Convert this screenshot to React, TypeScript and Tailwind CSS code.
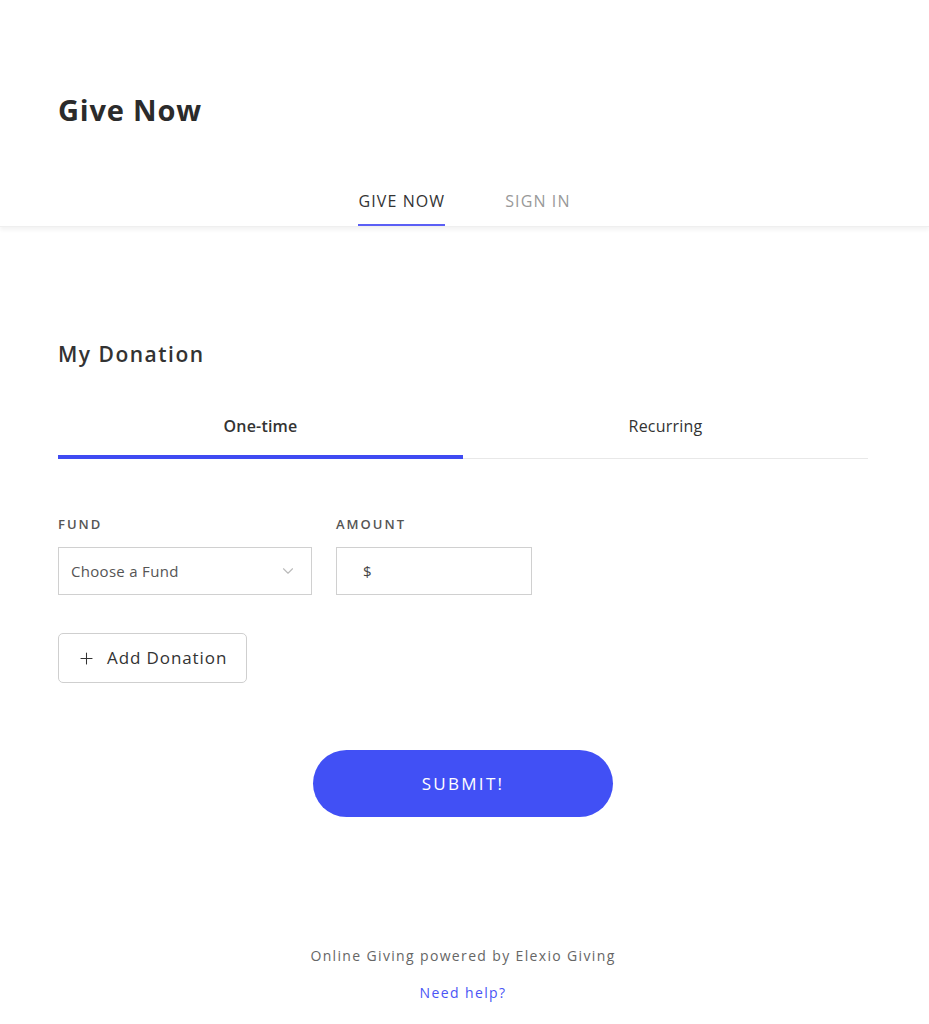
import { ChevronDown, Plus } from 'lucide-react'

const FONT = { fontFamily: '"Open Sans", "Noto Sans", sans-serif' }

export default function App() {
  return (
    <div className="min-h-screen bg-white text-[#333]" style={FONT}>
      <header className="pt-[92px] pl-[58px]">
        <h1 className="text-[29px] font-bold leading-[36px] tracking-[0.8px] text-[#2b2b2b]">Give Now</h1>
      </header>

      <nav className="mt-[50px] flex justify-center gap-[60px] bg-white shadow-[0_3px_4px_rgba(0,0,0,0.05)] border-b border-[#efefef]">
        <a className="pt-[11px] pb-[11px] text-[16px] leading-[24px] tracking-[1.1px] text-[#333] border-b-2 border-[#5b5ff5]">
          GIVE NOW
        </a>
        <a className="pt-[11px] pb-[11px] text-[16px] leading-[24px] tracking-[1.1px] text-[#999] border-b-2 border-transparent">
          SIGN IN
        </a>
      </nav>

      <main className="ml-[58px] w-[810px]">
        <h2 className="mt-[113px] text-[21px] font-semibold leading-[28px] tracking-[1.5px] text-[#333]">My Donation</h2>

        <div className="mt-[46px] grid grid-cols-2">
          <button className="flex items-start justify-center pb-[17px] text-[16px] font-semibold leading-[24px] tracking-[0.2px] text-[#333] border-b-4 border-[#3f4bf2]">
            One-time
          </button>
          <button className="flex items-start justify-center pb-[17px] text-[16px] leading-[24px] tracking-[0.2px] text-[#333] border-b border-[#e8e8e8]">
            Recurring
          </button>
        </div>

        <div className="mt-[56px] flex gap-[24px]">
          <div className="flex flex-col">
            <label className="text-[13px] font-semibold leading-[18px] tracking-[2px] text-[#555]">FUND</label>
            <div className="mt-[14px] flex h-[48px] w-[254px] items-center justify-between border border-[#d0d0d0] pl-[12px] pr-[14px]">
              <span className="text-[15px] tracking-[0.3px] text-[#555]">Choose a Fund</span>
              <ChevronDown size={18} strokeWidth={1.5} className="text-[#bbb]" />
            </div>
          </div>
          <div className="flex flex-col">
            <label className="text-[13px] font-semibold leading-[18px] tracking-[2px] text-[#555]">AMOUNT</label>
            <div className="mt-[14px] flex h-[48px] w-[196px] items-center border border-[#d0d0d0] pl-[26px]">
              <span className="text-[15px] text-[#444]">$</span>
            </div>
          </div>
        </div>

        <button className="mt-[38px] flex h-[50px] w-[189px] items-center gap-[11px] rounded-[5px] border border-[#cfcfcf] pl-[18px] text-[17px] tracking-[0.9px] text-[#333]">
          <Plus size={19} strokeWidth={1.3} />
          Add Donation
        </button>

        <div className="mt-[67px] flex justify-center">
          <button className="h-[67px] w-[300px] rounded-full bg-[#4150f5] text-[17px] tracking-[2.3px] text-white">
            SUBMIT!
          </button>
        </div>

        <footer className="mt-[129px] flex flex-col items-center">
          <p className="text-[14px] leading-[20px] tracking-[1.35px] text-[#666]">Online Giving powered by Elexio Giving</p>
          <a className="mt-[17px] text-[14px] leading-[20px] tracking-[1.4px] text-[#4a55f5]">Need help?</a>
        </footer>
      </main>
    </div>
  )
}
